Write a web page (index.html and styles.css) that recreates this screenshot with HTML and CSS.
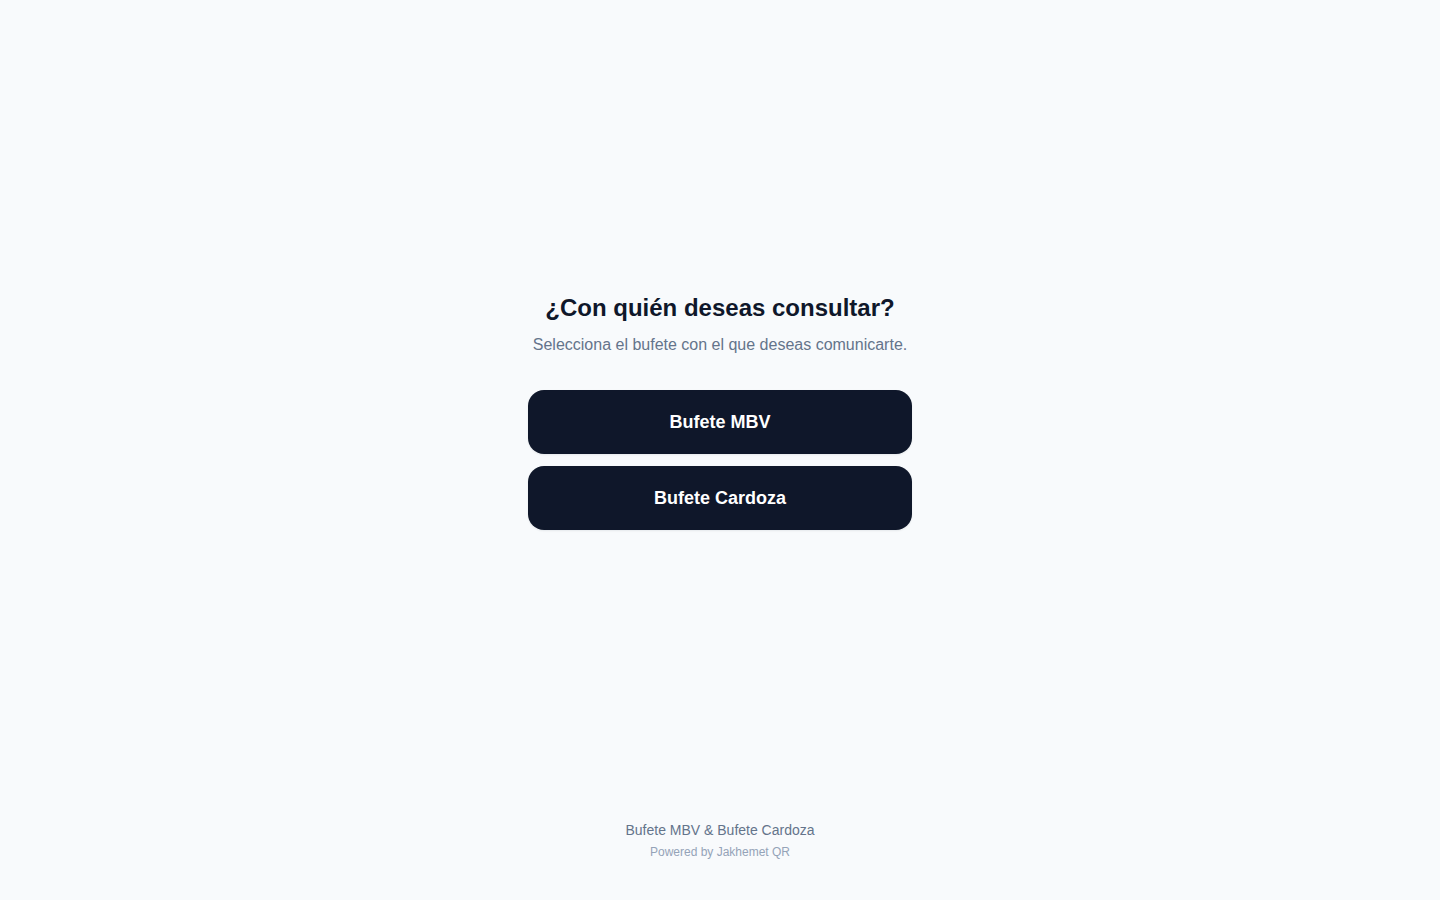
FILE: index.html
```html
<!DOCTYPE html>
<html lang="es">
<head>
<meta charset="utf-8">
<title>Bufete MBV & Bufete Cardoza</title>
<link rel="stylesheet" href="styles.css">
</head>
<body>
<div class="page">
  <main class="main">
    <div class="card">
      <h1 class="title">¿Con quién deseas consultar?</h1>
      <p class="subtitle">Selecciona el bufete con el que deseas comunicarte.</p>
      <div class="options">
        <a class="option" href="#">Bufete MBV</a>
        <a class="option" href="#">Bufete Cardoza</a>
      </div>
    </div>
  </main>
  <footer class="footer">
    <p class="footer-name">Bufete MBV &amp; Bufete Cardoza</p>
    <p class="footer-powered">Powered by Jakhemet QR</p>
  </footer>
</div>
</body>
</html>
```
FILE: styles.css
```css
* { box-sizing: border-box; }
html, body { margin: 0; padding: 0; }
body {
  background: #f8fafc;
  font-family: "Liberation Sans", Arial, sans-serif;
  color: #0f172a;
}
.page {
  min-height: 100vh;
  display: flex;
  flex-direction: column;
}
.main {
  flex: 1;
  display: flex;
  align-items: center;
  justify-content: center;
  padding-top: 2px;
}
.card {
  width: 384px;
  text-align: center;
}
.title {
  margin: 0;
  font-size: 24px;
  line-height: 32px;
  font-weight: 700;
  color: #0f172a;
}
.subtitle {
  margin: 9px 0 0;
  font-size: 16px;
  line-height: 24px;
  color: #64748b;
}
.options {
  margin-top: 33px;
  display: flex;
  flex-direction: column;
  gap: 12px;
}
.option {
  display: flex;
  align-items: center;
  justify-content: center;
  height: 64px;
  border-radius: 16px;
  background: #0f172a;
  color: #ffffff;
  font-size: 18px;
  font-weight: 700;
  text-decoration: none;
  box-shadow: 0 1px 2px rgba(15, 23, 42, 0.08);
}
.footer {
  padding: 0 0 40px;
  text-align: center;
}
.footer-name {
  margin: 0;
  font-size: 14px;
  line-height: 20px;
  color: #64748b;
}
.footer-powered {
  margin: 4px 0 0;
  font-size: 12px;
  line-height: 16px;
  color: #94a3b8;
}
```
